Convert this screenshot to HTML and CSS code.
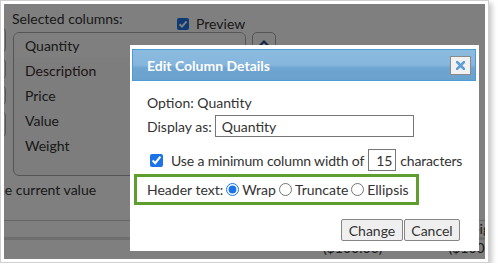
FILE: index.html
```html
<!DOCTYPE html>
<html>
<head>
<meta charset="utf-8">
<link rel="stylesheet" href="styles.css">
</head>
<body>
<div class="frame">
  <div class="screen">
    <div class="page">
      <div class="row-head">
        <span class="lbl">Selected columns:</span>
        <label class="preview"><span class="pv-box"><svg width="12" height="12" viewBox="0 0 12 12"><path d="M2.5 6.2 L5 8.6 L9.6 3.4" fill="none" stroke="#fff" stroke-width="2"/></svg></span>Preview</label>
      </div>
      <div class="row-main">
        <div class="stubs">
          <div class="stub s1"></div>
          <div class="stub s2"></div>
          <div class="stub s3"></div>
          <div class="stub s4"></div>
        </div>
        <ul class="listbox">
          <li class="sel">Quantity</li>
          <li class="red">Description</li>
          <li>Price</li>
          <li>Value</li>
          <li>Weight</li>
        </ul>
        <div class="updown">
          <div class="ud-btn"><svg width="12" height="8" viewBox="0 0 12 8"><path d="M1.5 7 L6 2.5 L10.5 7" fill="none" stroke="#1f4f8a" stroke-width="2"/></svg></div>
        </div>
      </div>
      <div class="hint">the current value</div>
      <div class="table">
        <div class="thead"><span class="th">Weight</span></div>
        <div class="trow"><span class="td c1">($100.00)</span><span class="td c2">($100.00)</span></div>
      </div>
    </div>
    <div class="overlay"></div>
    <div class="dialog">
      <div class="titlebar">
        <span class="title">Edit Column Details</span>
        <button class="close" aria-label="close"><svg width="9" height="9" viewBox="0 0 9 9"><path d="M1 1 L8 8 M8 1 L1 8" stroke="#5c9fd6" stroke-width="2.6" stroke-linecap="square"/></svg></button>
      </div>
      <div class="dbody">
        <div class="line">Option: Quantity</div>
        <div class="line field"><span>Display as:</span><input class="txt" type="text" value="Quantity"></div>
        <div class="line chk"><input type="checkbox" checked><span class="tight">Use a minimum column width of</span><input class="num" type="text" value="15"><span class="tight">characters</span></div>
        <div class="hilite"><span>Header text:</span><input type="radio" name="h" checked><span>Wrap</span><input type="radio" name="h"><span>Truncate</span><input type="radio" name="h"><span>Ellipsis</span></div>
        <div class="buttons"><button class="btn b-change">Change</button><button class="btn b-cancel">Cancel</button></div>
      </div>
    </div>
  </div>
</div>
</body>
</html>
```

FILE: styles.css
```css
* { box-sizing: border-box; }
html, body { margin: 0; padding: 0; background: #fff; }
body { font-family: Lato, "Open Sans", sans-serif; font-size: 14px; color: #333; }

.frame {
  width: 489px;
  height: 263px;
  border: 1px solid #cfcfcf;
  padding: 3px;
  background: #fff;
  box-shadow: 3px 3px 5px rgba(0,0,0,0.22);
}
.screen {
  position: relative;
  width: 481px;
  height: 255px;
  overflow: hidden;
}
.page {
  height: 100%;
  background: #fff;
  padding-top: 6px;
  line-height: 17px;
}
.row-head {
  display: flex;
  align-items: flex-start;
  height: 22px;
  padding-left: 8px;
}
.lbl { width: 165px; }
.preview { display: flex; align-items: center; margin-top: 5px; gap: 7px; }
.pv-box {
  width: 12px; height: 12px; border-radius: 2px;
  background: #1c74e9;
  display: flex; align-items: center; justify-content: center;
}
.row-main { display: flex; align-items: flex-start; }
.stubs { width: 2px; display: flex; flex-direction: column; gap: 5px; margin-top: -5px; }
.stub {
  width: 20px; margin-left: -18px;
  border: 1px solid #aaa; border-radius: 5px;
}
.s1 { height: 26px; }
.s2 { height: 22px; }
.s3 { height: 21px; }
.s4 { height: 27px; }
.listbox {
  list-style: none; margin: 0 0 0 7px; padding: 0;
  width: 233px; height: 144px;
  border: 1px solid #aaa; border-radius: 6px;
  background: #fafafa;
}
.listbox li { line-height: 25px; padding-left: 11px; }
.listbox li.sel { background: #fff; border-radius: 5px 5px 0 0; }
.listbox li.red { color: #3e2a2a; }
.updown { margin-left: 6px; }
.ud-btn {
  width: 24px; height: 40px; border: 1px solid #aaa; border-radius: 5px;
  display: flex; justify-content: center; padding-top: 6px;
}
.hint { margin: 5px 0 0 -12px; }
.table { margin-top: 22px; }
.thead {
  border-top: 1px solid #ccc;
  border-bottom: 3px solid #ddd;
  height: 20px;
  display: flex; justify-content: flex-end;
}
.th { margin-right: -18px; line-height: 16px; }
.trow { position: relative; display: flex; height: 20px; }
.td { line-height: 16px; }
.c1 { margin-left: 319px; }
.c2 { margin-left: 66px; }

.overlay { position: absolute; inset: 0; background: rgba(0,0,0,0.5); }

.dialog {
  position: absolute;
  left: 126px; top: 41px;
  width: 349px; height: 206px;
  background: #fff;
  padding: 4px 3px 0 2px;
}
.titlebar {
  height: 32px;
  border: 1px solid #4c9bd6;
  background: linear-gradient(#8cbbe0 0%, #86b6dc 50%, #6fa5d0 60%, #6aa2ce 100%);
  display: flex; align-items: center; justify-content: space-between;
  padding: 0 4px 0 14px;
}
.title { color: #fff; font-weight: bold; font-size: 14px; }
.close {
  width: 21px; height: 19px; padding: 0;
  background: #f1f1f1; border: 1px solid #8a8a8a; border-radius: 0;
  display: flex; align-items: center; justify-content: center;
}
.dbody { padding: 13px 0 0 15px; line-height: 17px; }
.line { display: flex; align-items: center; white-space: nowrap; }
.field { margin-top: 4px; }
.txt {
  width: 199px; height: 22px; margin: 0 0 0 3px;
  border: 1px solid #767676; border-radius: 0;
  font: 14px Lato, sans-serif; color: #333; padding: 0 6px;
}
.chk { margin-top: 12px; }
.chk input[type=checkbox] { width: 13px; height: 13px; margin: 0 8px 0 3px; accent-color: #1a73e8; }
.tight { letter-spacing: -0.15px; }
.num {
  width: 28px; height: 22px; margin: 0 4px;
  border: 1px solid #767676; border-radius: 0;
  font: 14px Lato, sans-serif; color: #333; padding: 0 0 0 7px;
}
.hilite {
  margin: 3px 0 0 -13px;
  width: 285px; height: 31px;
  border: 3px solid #5e9e2f;
  display: flex; align-items: center;
  padding-left: 10px;
  white-space: nowrap;
}
.hilite input { width: 13px; height: 13px; margin: 0 3px 0 3px; accent-color: #1a73e8; }
.buttons { display: flex; justify-content: flex-end; gap: 1px; margin: 14px 16px 0 0; }
.btn {
  height: 22px; padding: 0;
  background: #efefef; border: 1px solid #858585; border-radius: 2px;
  font: 14px Lato, sans-serif; color: #333;
}
.b-change { width: 62px; }
.b-cancel { width: 56px; }
```
